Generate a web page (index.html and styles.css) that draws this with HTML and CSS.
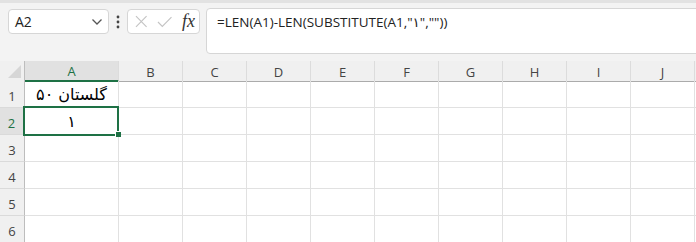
FILE: index.html
```html
<!DOCTYPE html>
<html>
<head>
    <link rel="stylesheet" href="styles.css">
</head>
<body>
    <div class="top-strip"></div>

    <div class="formula-bar">
        <div class="name-box">
            <span>A2</span>
            <svg class="chevron" width="12" height="8" viewBox="0 0 12 8">
                <path d="M1.5 1.5 L6 6 L10.5 1.5" fill="none" stroke="#555" stroke-width="1.3"/>
            </svg>
        </div>

        <svg class="dots" width="4" height="14" viewBox="0 0 4 14">
            <circle cx="2" cy="2" r="1.4" fill="#444"/>
            <circle cx="2" cy="7" r="1.4" fill="#444"/>
            <circle cx="2" cy="12" r="1.4" fill="#444"/>
        </svg>

        <div class="func-box">
            <svg width="13" height="13" viewBox="0 0 13 13">
                <path d="M1 1 L12 12 M12 1 L1 12" stroke="#c4c4c4" stroke-width="1.2" fill="none"/>
            </svg>
            <svg width="16" height="12" viewBox="0 0 16 12">
                <path d="M1 6 L5.5 10.5 L15 1" stroke="#c4c4c4" stroke-width="1.2" fill="none"/>
            </svg>
            <span class="fx">fx</span>
        </div>

        <div class="formula-box">=LEN(A1)-LEN(SUBSTITUTE(A1,"۱",""))</div>
    </div>

    <div class="sheet">
        <div class="row head-row">
            <div class="cell corner">
                <svg width="13" height="13" viewBox="0 0 13 13">
                    <path d="M13 0 L13 13 L0 13 Z" fill="#d6d6d6"/>
                </svg>
            </div>
            <div class="cell col-head active-col">A</div>
            <div class="cell col-head">B</div>
            <div class="cell col-head">C</div>
            <div class="cell col-head">D</div>
            <div class="cell col-head">E</div>
            <div class="cell col-head">F</div>
            <div class="cell col-head">G</div>
            <div class="cell col-head">H</div>
            <div class="cell col-head">I</div>
            <div class="cell col-head">J</div>
            <div class="cell col-head tail"></div>
        </div>

        <div class="row">
            <div class="cell row-head">1</div>
            <div class="cell data" dir="rtl">گلستان ۵۰</div>
            <div class="cell"></div><div class="cell"></div><div class="cell"></div>
            <div class="cell"></div><div class="cell"></div><div class="cell"></div>
            <div class="cell"></div><div class="cell"></div><div class="cell"></div>
            <div class="cell tail"></div>
        </div>

        <div class="row">
            <div class="cell row-head active-row">2</div>
            <div class="cell data selected" dir="rtl">۱</div>
            <div class="cell"></div><div class="cell"></div><div class="cell"></div>
            <div class="cell"></div><div class="cell"></div><div class="cell"></div>
            <div class="cell"></div><div class="cell"></div><div class="cell"></div>
            <div class="cell tail"></div>
        </div>

        <div class="row">
            <div class="cell row-head">3</div>
            <div class="cell"></div><div class="cell"></div><div class="cell"></div>
            <div class="cell"></div><div class="cell"></div><div class="cell"></div>
            <div class="cell"></div><div class="cell"></div><div class="cell"></div>
            <div class="cell"></div>
            <div class="cell tail"></div>
        </div>

        <div class="row">
            <div class="cell row-head">4</div>
            <div class="cell"></div><div class="cell"></div><div class="cell"></div>
            <div class="cell"></div><div class="cell"></div><div class="cell"></div>
            <div class="cell"></div><div class="cell"></div><div class="cell"></div>
            <div class="cell"></div>
            <div class="cell tail"></div>
        </div>

        <div class="row">
            <div class="cell row-head">5</div>
            <div class="cell"></div><div class="cell"></div><div class="cell"></div>
            <div class="cell"></div><div class="cell"></div><div class="cell"></div>
            <div class="cell"></div><div class="cell"></div><div class="cell"></div>
            <div class="cell"></div>
            <div class="cell tail"></div>
        </div>

        <div class="row">
            <div class="cell row-head">6</div>
            <div class="cell"></div><div class="cell"></div><div class="cell"></div>
            <div class="cell"></div><div class="cell"></div><div class="cell"></div>
            <div class="cell"></div><div class="cell"></div><div class="cell"></div>
            <div class="cell"></div>
            <div class="cell tail"></div>
        </div>
    </div>
</body>
</html>
```

FILE: styles.css
```css
/* Page and top area */
body {
    margin: 0;
    background-color: #f3f3f3;
    font-family: "Open Sans", "Noto Sans", "DejaVu Sans", sans-serif;
    color: #222;
    overflow: hidden;
}

.top-strip {
    height: 3px;
    background-color: #e2e2e2;
}

/* Formula bar */
.formula-bar {
    display: flex;
    align-items: flex-start;
    height: 51px;
    padding-top: 5px;
    padding-left: 8px;
}

.name-box {
    display: flex;
    align-items: center;
    justify-content: space-between;
    box-sizing: border-box;
    width: 101px;
    height: 25px;
    margin-top: 1px;
    padding: 0 5px 0 6px;
    background-color: #fff;
    border: 1px solid #d6d6d6;
    border-radius: 4px;
    font-size: 14px;
}

.dots {
    margin: 7px 7px 0 7px;
}

.func-box {
    display: flex;
    align-items: center;
    gap: 9px;
    box-sizing: border-box;
    width: 73px;
    height: 25px;
    margin-top: 1px;
    padding: 0 4px 0 7px;
    background-color: #fff;
    border: 1px solid #d6d6d6;
    border-radius: 4px;
}

.fx {
    margin-left: 1px;
    font-family: "Liberation Serif", "DejaVu Serif", serif;
    font-style: italic;
    font-size: 18px;
    color: #333;
}

.formula-box {
    flex: 1;
    box-sizing: border-box;
    height: 46px;
    margin-left: 6px;
    margin-right: -10px;
    padding: 4px 10px;
    background-color: #fff;
    border: 1px solid #d6d6d6;
    border-radius: 4px;
    font-size: 13.5px;
    font-family: "Open Sans", "DejaVu Sans", sans-serif;
}

/* Sheet grid */
.sheet {
    margin-top: 2px;
    background-color: #fff;
}

.row {
    display: grid;
    grid-template-columns: 25px 94px repeat(9, 64px) 1fr;
    height: 27px;
}

.head-row {
    height: 20px;
    background-color: #f0f0f0;
}

.cell {
    box-sizing: border-box;
    border-right: 1px solid #e1e1e1;
    border-bottom: 1px solid #e1e1e1;
}

.cell.tail {
    border-right: none;
}

.corner {
    display: flex;
    align-items: flex-end;
    justify-content: flex-end;
    padding: 0 3px 3px 0;
    background-color: #f0f0f0;
    border-right: 1px solid #bdbdbd;
    border-bottom: 1px solid #ababab;
}

.col-head {
    display: flex;
    align-items: center;
    justify-content: center;
    padding-top: 1px;
    font-size: 13px;
    color: #444;
    border-right-color: #dcdcdc;
    border-bottom: 1px solid #ababab;
}

.active-col {
    background-color: #e1e1e1;
    color: #1e7145;
    border-bottom: 2px solid #1e7145;
}

.row-head {
    display: flex;
    align-items: flex-end;
    justify-content: center;
    padding-bottom: 2px;
    background-color: #f0f0f0;
    font-size: 13px;
    color: #444;
    border-right: 1px solid #bdbdbd;
    border-bottom-color: #dadada;
}

.active-row {
    background-color: #e1e1e1;
    color: #1e7145;
    border-right: 2px solid #1e7145;
}

.data {
    display: flex;
    align-items: center;
    justify-content: center;
    font-family: "DejaVu Sans", "Noto Sans", sans-serif;
    font-size: 16px;
    color: #000;
}

/* Selected cell outline and fill handle */
.selected {
    position: relative;
}

.selected::before {
    content: "";
    position: absolute;
    top: -2px;
    left: -2px;
    right: -1px;
    bottom: -2px;
    border: 2px solid #1e7145;
}

.selected::after {
    content: "";
    position: absolute;
    right: -3px;
    bottom: -3px;
    width: 5px;
    height: 5px;
    background-color: #1e7145;
    border-left: 1px solid #fff;
    border-top: 1px solid #fff;
}
```
